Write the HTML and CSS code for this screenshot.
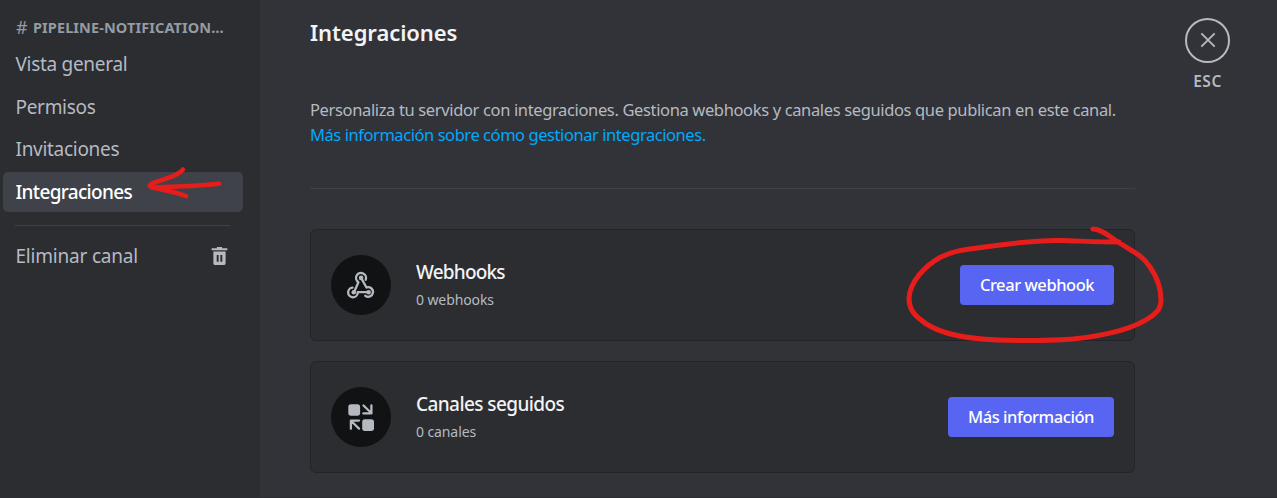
FILE: index.html
```html
<!DOCTYPE html>
<html lang="es">
<head>
<meta charset="utf-8">
<title>Integraciones</title>
<link rel="stylesheet" href="styles.css">
</head>
<body>
<div class="app">
  <nav class="sidebar">
    <div class="channel"><span class="hash">#</span><span class="channel-name">pipeline-notification…</span></div>
    <a class="item"><span>Vista general</span></a>
    <a class="item"><span>Permisos</span></a>
    <a class="item"><span>Invitaciones</span></a>
    <a class="item active"><span>Integraciones</span></a>
    <div class="separator"></div>
    <a class="item"><span class="delete">Eliminar canal</span>
      <svg class="trash" width="21" height="23" viewBox="0 0 24 24" preserveAspectRatio="none" fill="currentColor"><path d="M15 3.500V2H9V3.500H3V5.500H21V3.500H15Z"/><path d="M5 6.800V18.500C5 20.101 5.897 20.999 7 20.999H17C18.103 20.999 19 20.101 19 18.500V6.800H5ZM11 17.500H8.800V10.500H11V17.500ZM15.200 17.500H13V10.500H15.200V17.500Z"/></svg>
    </a>
  </nav>
  <main class="content">
    <section class="panel">
      <h1><span>Integraciones</span></h1>
      <p class="intro"><span>Personaliza tu servidor con integraciones. Gestiona webhooks y canales seguidos que publican en este canal.</span><br><a class="link">Más información sobre cómo gestionar integraciones.</a></p>
      <hr>
      <article class="card">
        <div class="badge">
          <svg width="30" height="30" viewBox="0 0 30 30" fill="none" stroke="currentColor" stroke-width="2.3" stroke-linecap="round" stroke-linejoin="round">
            <path d="M19.7 9.8A5 5 0 1 0 12.4 12.2L8.1 22.1"/>
            <path d="M6.5 17.7A4.8 4.8 0 1 0 11.7 23.1V22.2H22.5"/>
            <path d="M15.1 7.9L20.5 17.5A4.8 4.8 0 1 1 19.3 25.8"/>
            <g fill="currentColor" stroke="none"><circle cx="15.1" cy="7.9" r="2.3"/><circle cx="7.8" cy="22.2" r="2.3"/><circle cx="22.6" cy="22.2" r="2.3"/></g>
          </svg>
        </div>
        <div class="info"><h2 class="hooks"><span>Webhooks</span></h2><p><span>0 webhooks</span></p></div>
        <button class="btn create"><span>Crear webhook</span></button>
      </article>
      <article class="card">
        <div class="badge">
          <svg width="30" height="30" viewBox="0 0 30 30" fill="none" stroke="currentColor" stroke-width="2.3" stroke-linecap="round" stroke-linejoin="round">
            <g fill="currentColor" stroke="none"><rect x="2.3" y="2.2" width="11.8" height="11.600" rx="2.7"/><rect x="16.2" y="17.200" width="11.8" height="11.800" rx="2.7"/></g>
            <path d="M17.500 3.500L25 10.800M25.400 3.400V11.400H17.400"/>
            <path d="M13 26.600L5.500 19.200M4.900 26.800V18.600H13"/>
          </svg>
        </div>
        <div class="info"><h2><span>Canales seguidos</span></h2><p><span>0 canales</span></p></div>
        <button class="btn more"><span>Más información</span></button>
      </article>
    </section>
    <aside class="close">
      <div class="ring"><svg width="16" height="16" viewBox="0 0 16 16" fill="none" stroke="currentColor" stroke-width="1.9"><path d="M1.3 1.3L14.7 14.7M14.7 1.3L1.3 14.7"/></svg></div>
      <span class="esc">ESC</span>
    </aside>
  </main>
  <svg class="marks" width="1277" height="498" viewBox="0 0 1277 498" fill="none" stroke="#e71d1b" stroke-width="5" stroke-linecap="round" stroke-linejoin="round">
    <path stroke-width="4.6" d="M183 169.500C179 175 168 178 159 181C153 183 149 184.500 150 186C151 188 158 187.500 171 186.800C190 186 202 185.700 219 183.700M151 187C161 190 174 191 186 196"/>
    <path d="M1093 229C1101 229 1109 236 1118 242C1134 252 1143 256 1150 267C1157 277 1161 288 1161 300C1161 308 1158 311 1152 316C1133 330 1102 336 1073 339C1044 341 1003 341 982 339C958 337 935 332 921 320C912 313 909 307 909 298C910 281 926 265 941 257C955 250 969 249 985 247C1008 244 1033 240 1060 240.500C1080 241 1100 242 1119 242"/>
  </svg>
</div>
</body>
</html>
```
FILE: styles.css
```css
* { box-sizing: border-box; }
body { margin: 0; background: #313338; font-family: "Noto Sans", sans-serif; color: #b5bac1; }
h1, h2, p, hr { margin: 0; }
span, .link { white-space: nowrap; }

.app { display: flex; width: 1277px; height: 498px; overflow: hidden; position: relative; border-bottom: 1px solid #2c2d32; }
.marks { position: absolute; left: 0; top: 0; pointer-events: none; }

.sidebar { width: 260px; flex: none; background: #2b2d31; padding: 11px 17px 0 3px; display: flex; flex-direction: column; }
.channel { height: 33px; flex: none; padding: 0 0 2px 13px; display: flex; align-items: center; gap: 4px; color: #949ba4; }
.hash { font-size: 18px; width: 13px; }
.channel-name { font-size: 14.500px; font-weight: 700; letter-spacing: 0.1px; text-transform: uppercase; }
.item { height: 40px; flex: none; margin-bottom: 2.5px; padding: 0 12px 0 12.500px; border-radius: 5px; display: flex; align-items: center; justify-content: space-between; font-size: 19px; letter-spacing: -0.3px; }
.active { background: #404249; color: #fff; font-weight: 500; letter-spacing: -0.67px; }
.separator { height: 1px; flex: none; margin: 11px 13px 9.500px 12px; background: #3f4147; }
.delete { letter-spacing: -0.2px; }
.trash { margin: 2px 1px 0 0; }

.content { flex: 1; display: flex; padding-left: 50px; }
.panel { width: 825px; flex: none; padding-top: 17px; }
h1 { font-size: 22px; line-height: 30px; font-weight: 600; letter-spacing: -0.08px; color: #f2f3f5; }
.intro { margin-top: 50px; font-size: 16.500px; line-height: 25px; letter-spacing: -0.36px; }
.link { color: #00a8fc; letter-spacing: -0.44px; }
hr { height: 1px; border: 0; background: #3f4147; margin: 41px 0 40px; }
.card { height: 112px; margin-bottom: 20px; padding: 0 20px; display: flex; align-items: center; background: #2b2d31; border: 1px solid #232428; border-radius: 6px; }
.badge { width: 60px; height: 60px; border-radius: 50%; background: #111214; display: flex; align-items: center; justify-content: center; flex: none; }
.info { flex: 1; margin-left: 25px; padding-top: 1px; }
h2 { font-size: 19px; line-height: 25px; font-weight: 500; letter-spacing: -0.58px; color: #f2f3f5; }
.hooks { letter-spacing: -0.8px; }
.info p { margin-top: 3px; font-size: 14px; line-height: 24px; letter-spacing: -0.1px; }
.btn { height: 40px; flex: none; padding: 0 0 2px; border: 0; border-radius: 4px; background: #5865f2; color: #fff; font: 500 16.500px "Noto Sans", sans-serif; letter-spacing: -0.45px; }
.create { width: 154px; }
.more { width: 166px; }

.close { width: 45px; margin-left: 50px; padding-top: 18px; display: flex; flex-direction: column; align-items: center; }
.ring { width: 45px; height: 45px; flex: none; border: 2px solid #b5bac1; border-radius: 50%; display: flex; align-items: center; justify-content: center; }
.ring svg { margin-bottom: 1px; }
.esc { margin-top: 8px; font-size: 15.500px; line-height: 20px; font-weight: 600; letter-spacing: 0.5px; }
```
